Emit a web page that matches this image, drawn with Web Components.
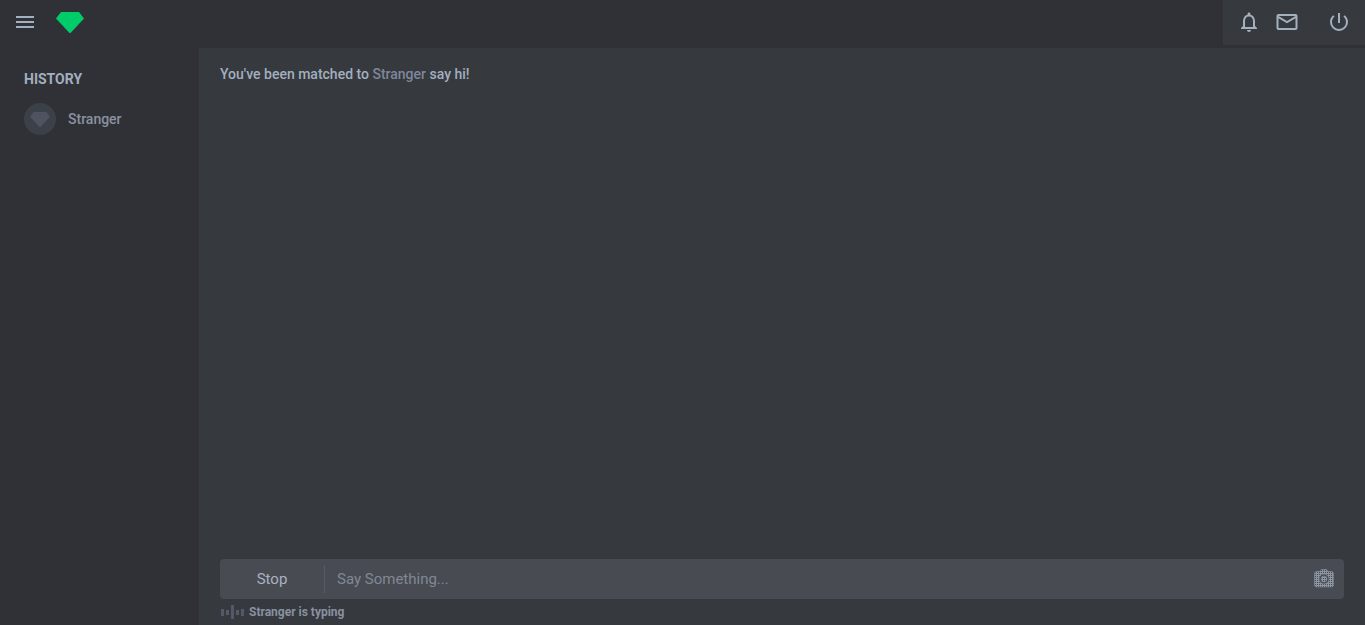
<!DOCTYPE html>
<html lang="en">
<head>
<meta charset="utf-8">
<title>Chat</title>
<style>
  html, body { margin: 0; height: 100%; }
  body { background: #303136; font: 14px/20px Roboto, "Liberation Sans", sans-serif; color: #a3afbf; }
</style>
</head>
<body>
<chat-app>
  <top-bar slot="header"></top-bar>
  <history-list slot="sidebar">
    <history-item>Stranger</history-item>
  </history-list>
  <message-log slot="log">You've been matched to <peer-name>Stranger</peer-name> say hi!</message-log>
  <message-composer slot="composer"></message-composer>
  <typing-status slot="composer">Stranger is typing</typing-status>
</chat-app>
<script>
const define = (name, html) => {
  const template = document.createElement('template');
  template.innerHTML = html;
  customElements.define(name, class extends HTMLElement {
    constructor() {
      super();
      this.attachShadow({ mode: 'open' }).append(template.content.cloneNode(true));
    }
  });
};

define('chat-app', `
  <style>
    :host { display: grid; grid-template: 48px minmax(0, 1fr) / 199px minmax(0, 1fr); min-height: 100vh; }
    header { grid-column: 1 / -1; }
    main { display: flex; flex-direction: column; background: #36393e; padding: 16px 21px 3px; }
    .log { flex: 1; }
  </style>
  <header><slot name="header"></slot></header>
  <aside><slot name="sidebar"></slot></aside>
  <main>
    <div class="log"><slot name="log"></slot></div>
    <slot name="composer"></slot>
  </main>
`);

define('gem-icon', `
  <style>
    :host { display: block; }
    svg { display: block; width: 100%; height: auto; fill: currentColor; }
  </style>
  <svg viewBox="0 0 28 21" aria-hidden="true"><path d="M5 0h18l5 6.500L14.500 21h-1L0 6.500z"/></svg>
`);

define('top-bar', `
  <style>
    :host { display: flex; justify-content: space-between; align-items: flex-start; }
    .brand { display: flex; align-items: center; gap: 19px; height: 44px; padding-left: 13px; }
    a { color: #00cd6a; width: 28px; }
    nav { display: flex; align-items: center; box-sizing: border-box; height: 45px; background: #36393e; padding: 0 14px 1px; gap: 14px; }
    button { display: block; border: 0; padding: 0; background: none; color: #a3b0bf; width: 24px; height: 24px; cursor: pointer; }
    nav button:last-child { margin-left: 14px; }
    svg { display: block; width: 24px; height: 24px; fill: currentColor; }
  </style>
  <div class="brand">
    <button aria-label="Menu"><svg viewBox="0 0 24 24"><path d="M3 6h18v2H3zM3 11h18v2H3zM3 16h18v2H3z"/></svg></button>
    <a href="#" aria-label="Home"><gem-icon></gem-icon></a>
  </div>
  <nav>
    <button aria-label="Notifications"><svg viewBox="0 0 24 24"><path d="M12 22c1.100 0 2-.9 2-2h-4c0 1.100.9 2 2 2zm6-6v-5c0-3.070-1.630-5.640-4.500-6.320V4c0-.83-.67-1.500-1.500-1.500s-1.500.67-1.500 1.500v.68C7.640 5.360 6 7.920 6 11v5l-2 2v1h16v-1l-2-2zm-2 1H8v-6c0-2.480 1.510-4.500 4-4.500s4 2.020 4 4.500v6z"/></svg></button>
    <button aria-label="Messages"><svg viewBox="0 0 24 24"><path d="M3.500 4h17A2 2 0 0 1 22.500 6v12a2 2 0 0 1-2 2h-17a2 2 0 0 1-2-2V6a2 2 0 0 1 2-2zm8.500 7l8.500-5h-17l8.500 5zm-8.500 7h17V8.370l-8.500 5-8.500-5V18z"/></svg></button>
    <button aria-label="Log out"><svg viewBox="0 0 24 24"><path d="M13 3h-2v10h2V3zm4.830 2.170l-1.420 1.420A6.920 6.920 0 0 1 19 12a7 7 0 0 1-14 0c0-2.170 1-4.100 2.580-5.420L6.170 5.170A8.930 8.930 0 0 0 3 12a9 9 0 0 0 18 0c0-2.740-1.230-5.180-3.170-6.830z"/></svg></button>
  </nav>
`);

define('history-list', `
  <style>
    :host { display: block; padding: 21px 24px; }
    h2 { margin: 0 0 14px; font: inherit; font-weight: 700; }
  </style>
  <h2>HISTORY</h2>
  <slot></slot>
`);

define('history-item', `
  <style>
    :host { display: block; }
    a { display: flex; align-items: center; gap: 12px; color: #8b91a1; font-weight: 500; text-decoration: none; }
    .avatar { display: flex; align-items: center; justify-content: center; width: 32px; height: 32px; border-radius: 50%; background: #3b4149; color: #4f5361; }
    gem-icon { width: 20px; }
  </style>
  <a href="#"><span class="avatar"><gem-icon></gem-icon></span><slot></slot></a>
`);

define('message-log', `
  <style>:host { display: block; font-weight: 500; }</style>
  <slot></slot>
`);

define('peer-name', `
  <style>:host { color: #7f879a; }</style>
  <slot></slot>
`);

define('message-composer', `
  <style>
    :host { display: flex; align-items: center; height: 40px; border-radius: 4px; background: #484b52; font-size: 15px; }
    button, input { border: 0; margin: 0; background: none; font: inherit; }
    .stop { width: 104px; height: 40px; padding: 0; color: #a8b2c1; cursor: pointer; }
    input { flex: 1; min-width: 0; box-sizing: border-box; height: 28px; padding: 0 12px; border-left: 1px solid #555a6a; color: #a3afbf; outline: none; }
    input::placeholder { color: #818894; opacity: 1; }
    .camera { padding: 0; margin-right: 10px; color: #8c96a3; cursor: pointer; }
    svg { display: block; width: 20px; height: 20px; }
  </style>
  <button class="stop">Stop</button>
  <input type="text" placeholder="Say Something..." aria-label="Message">
  <button class="camera" aria-label="Send a picture">
    <svg viewBox="0 0 20 20">
      <defs>
        <pattern id="mesh" width="2" height="2" patternUnits="userSpaceOnUse"><path fill="currentColor" d="M0 0h2v1H1v1H0z"/></pattern>
      </defs>
      <path fill="url(#mesh)" stroke="currentColor" stroke-opacity=".5" fill-rule="evenodd" d="M7.500 .5h5l1.500 2h3.500a2 2 0 0 1 2 2v11.500a2 2 0 0 1-2 2h-15a2 2 0 0 1-2-2V4.500a2 2 0 0 1 2-2H6zM10 5a5 5 0 1 0 0 10 5 5 0 0 0 0-10zM10 7a3 3 0 1 1 0 6 3 3 0 0 1 0-6z"/>
    </svg>
  </button>
`);

define('typing-status', `
  <style>
    :host { display: flex; align-items: center; gap: 5px; margin-top: 3px; font-size: 12px; font-weight: 700; color: #8a91a0; }
    svg { display: block; width: 24px; height: 14px; fill: #555967; }
  </style>
  <svg viewBox="0 0 24 14" aria-hidden="true"><path d="M1 4h3v7H1zM6 5h3v5H6zM11 0h3v14h-3zM16 5h3v5h-3zM21 4h3v7h-3z"/></svg>
  <span><slot></slot></span>
`);
</script>
</body>
</html>
